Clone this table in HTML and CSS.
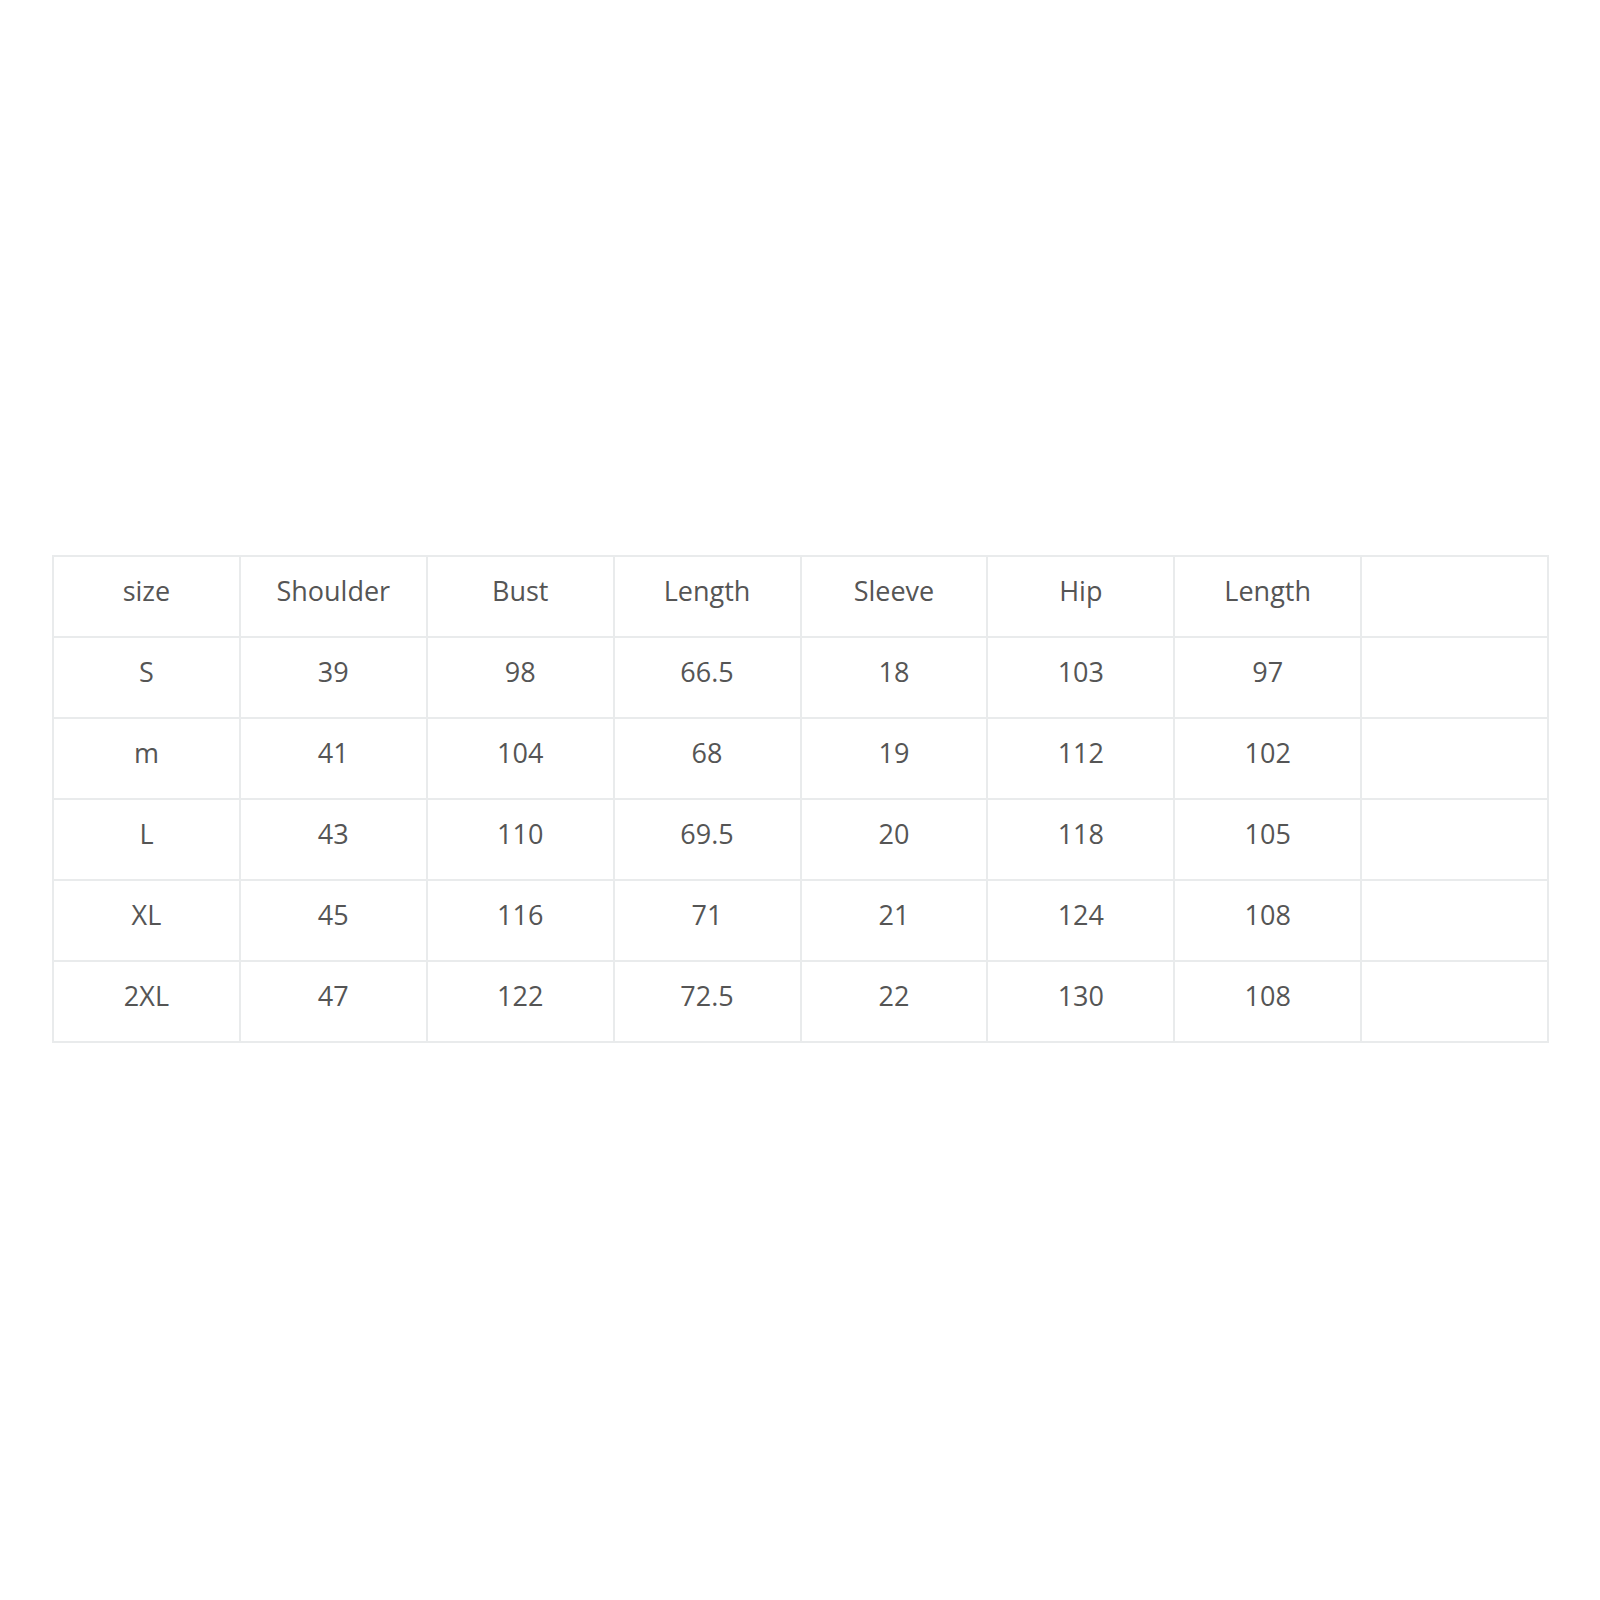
FILE: index.html
```html
<!DOCTYPE html>
<html>
<head>
<meta charset="utf-8">
<link rel="stylesheet" href="styles.css">
</head>
<body>
<div class="page">
<table class="size-table">
<tr><td>size</td><td>Shoulder</td><td>Bust</td><td>Length</td><td>Sleeve</td><td>Hip</td><td>Length</td><td></td></tr>
<tr><td>S</td><td>39</td><td>98</td><td>66.5</td><td>18</td><td>103</td><td>97</td><td></td></tr>
<tr><td>m</td><td>41</td><td>104</td><td>68</td><td>19</td><td>112</td><td>102</td><td></td></tr>
<tr><td>L</td><td>43</td><td>110</td><td>69.5</td><td>20</td><td>118</td><td>105</td><td></td></tr>
<tr><td>XL</td><td>45</td><td>116</td><td>71</td><td>21</td><td>124</td><td>108</td><td></td></tr>
<tr><td>2XL</td><td>47</td><td>122</td><td>72.5</td><td>22</td><td>130</td><td>108</td><td></td></tr>
</table>
</div>
</body>
</html>
```
FILE: styles.css
```css
html, body {
  margin: 0;
  padding: 0;
  background: #ffffff;
}
.page {
  width: 1600px;
  height: 1600px;
  padding: 555px 0 0 52px;
  box-sizing: border-box;
}
.size-table {
  border-collapse: collapse;
  width: 1497px;
  table-layout: fixed;
  font-family: "Open Sans", "Liberation Sans", sans-serif;
  font-size: 27px;
  color: #555555;
}
.size-table td {
  border: 2px solid #e9ebec;
  padding: 0 0 12px 0;
  text-align: center;
  vertical-align: middle;
  box-sizing: border-box;
  height: 81px;
}
```
